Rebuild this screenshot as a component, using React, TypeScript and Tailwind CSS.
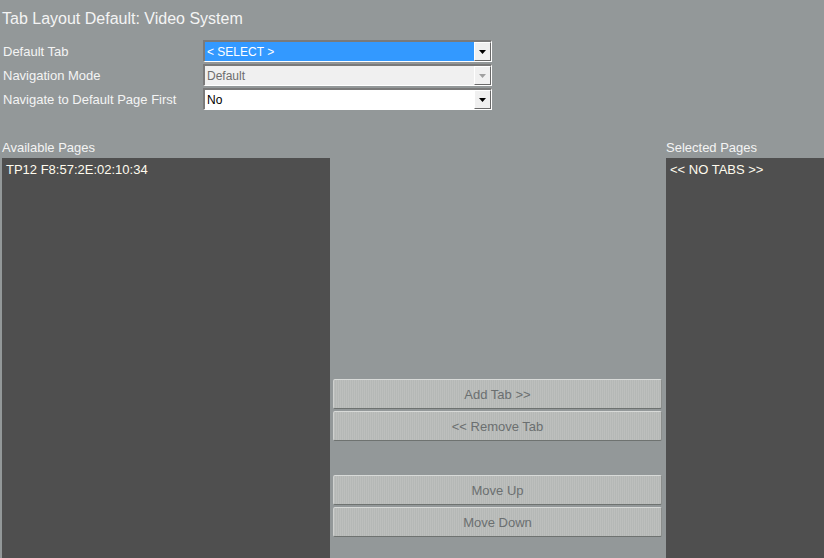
import React from 'react';

type SelectProps = {
  value: string;
  variant?: 'selected' | 'disabled' | 'normal';
};

function FakeSelect({ value, variant = 'normal' }: SelectProps) {
  const box =
    variant === 'selected'
      ? 'bg-[#3399ff] text-white'
      : variant === 'disabled'
        ? 'bg-[#f0f0f0] text-[#6d6d6d]'
        : 'bg-white text-black';
  return (
    <div className="flex h-[22px] w-[289px] border-t-2 border-l-2 border-t-[#7a7a7a] border-l-[#7a7a7a] border-b border-r border-b-white border-r-white bg-white">
      <div className={`flex flex-1 items-center pl-[2px] text-[12px] leading-none ${box}`}>{value}</div>
      <div className="flex w-[17px] items-center justify-center border border-t-white border-l-white border-b-[#6a6a6a] border-r-[#6a6a6a] bg-[#f0f0f0]">
        <svg width="8" height="4" viewBox="0 0 8 4">
          <path d="M0 0h7l-3.5 4z" fill={variant === 'disabled' ? '#a0a0a0' : '#000'} />
        </svg>
      </div>
    </div>
  );
}

function ActionButton({ label }: { label: string }) {
  return (
    <button className="h-[30px] w-full rounded-[2px] border border-t-[#d8dad8] border-l-[#cfd1cf] border-b-[#6e7270] border-r-[#8a8d8b] bg-[repeating-linear-gradient(90deg,#bdbfbd_0px,#bdbfbd_1px,#b5b8b6_1px,#b5b8b6_2px)] pt-[2px] text-[13px] text-[#6b6f70]">
      {label}
    </button>
  );
}

export default function App() {
  return (
    <div className="h-[558px] w-[824px] overflow-hidden bg-[#939899] font-['Liberation_Sans',Arial,sans-serif] text-[13px] text-[#f4f4f4]">
      <h1 className="pl-[2px] pt-[9px] text-[16px] leading-[20px]">Tab Layout Default: Video System</h1>

      <div className="mt-[11px] flex flex-col gap-[2px]">
        {[
          { label: 'Default Tab', value: '< SELECT >', variant: 'selected' as const },
          { label: 'Navigation Mode', value: 'Default', variant: 'disabled' as const },
          { label: 'Navigate to Default Page First', value: 'No', variant: 'normal' as const },
        ].map((row) => (
          <div key={row.label} className="flex h-[22px] items-center">
            <span className="w-[203px] pl-[3px] pt-[2px]">{row.label}</span>
            <FakeSelect value={row.value} variant={row.variant} />
          </div>
        ))}
      </div>

      <div className="mt-[31px] flex">
        <div className="ml-[2px] flex w-[328px] flex-col">
          <span className="leading-[14px]">Available Pages</span>
          <div className="mt-[3px] h-[400px] bg-[#4f4f4f] px-[4px] pt-[2px] text-[#fffbee]">TP12 F8:57:2E:02:10:34</div>
        </div>

        <div className="flex flex-1 flex-col pl-[3px] pr-[4px] pt-[238px]">
          <div className="flex flex-col gap-[2px]">
            <ActionButton label="Add Tab >>" />
            <ActionButton label="<< Remove Tab" />
          </div>
          <div className="mt-[34px] flex flex-col gap-[2px]">
            <ActionButton label="Move Up" />
            <ActionButton label="Move Down" />
          </div>
        </div>

        <div className="flex w-[158px] flex-col">
          <span className="leading-[14px]">Selected Pages</span>
          <div className="mt-[3px] h-[400px] bg-[#4f4f4f] px-[4px] pt-[2px] text-[#fffbee]">{'<< NO TABS >>'}</div>
        </div>
      </div>
    </div>
  );
}
